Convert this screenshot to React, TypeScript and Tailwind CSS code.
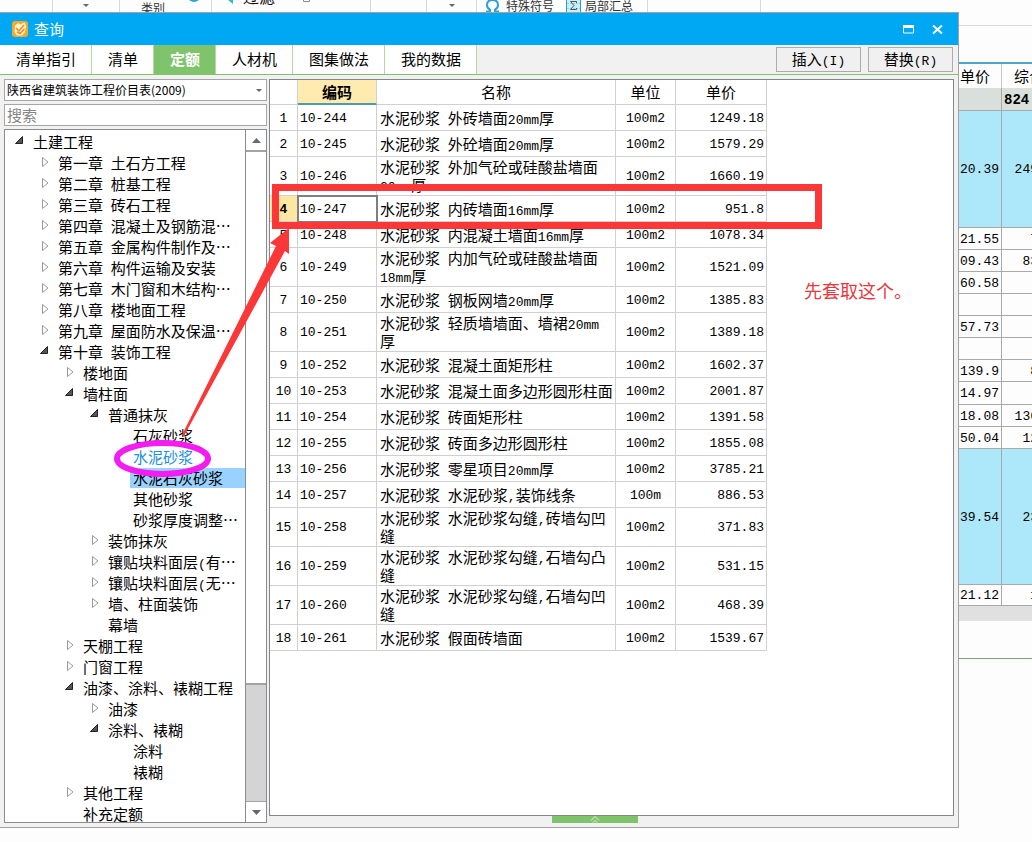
import { useState } from "react"
import clsx from "clsx"

type TreeItem = {
    level: number
    label: string
    state?: "open" | "closed"
}

const tabs = ["清单指引", "清单", "定额", "人材机", "图集做法", "我的数据"]

const tree: TreeItem[] = [
    { level: 0, label: "土建工程", state: "open" },
    { level: 1, label: "第一章 土石方工程", state: "closed" },
    { level: 1, label: "第二章 桩基工程", state: "closed" },
    { level: 1, label: "第三章 砖石工程", state: "closed" },
    { level: 1, label: "第四章 混凝土及钢筋混…", state: "closed" },
    { level: 1, label: "第五章 金属构件制作及…", state: "closed" },
    { level: 1, label: "第六章 构件运输及安装", state: "closed" },
    { level: 1, label: "第七章 木门窗和木结构…", state: "closed" },
    { level: 1, label: "第八章 楼地面工程", state: "closed" },
    { level: 1, label: "第九章 屋面防水及保温…", state: "closed" },
    { level: 1, label: "第十章 装饰工程", state: "open" },
    { level: 2, label: "楼地面", state: "closed" },
    { level: 2, label: "墙柱面", state: "open" },
    { level: 3, label: "普通抹灰", state: "open" },
    { level: 4, label: "石灰砂浆" },
    { level: 4, label: "水泥砂浆" },
    { level: 4, label: "水泥石灰砂浆" },
    { level: 4, label: "其他砂浆" },
    { level: 4, label: "砂浆厚度调整…" },
    { level: 3, label: "装饰抹灰", state: "closed" },
    { level: 3, label: "镶贴块料面层(有…", state: "closed" },
    { level: 3, label: "镶贴块料面层(无…", state: "closed" },
    { level: 3, label: "墙、柱面装饰", state: "closed" },
    { level: 3, label: "幕墙" },
    { level: 2, label: "天棚工程", state: "closed" },
    { level: 2, label: "门窗工程", state: "closed" },
    { level: 2, label: "油漆、涂料、裱糊工程", state: "open" },
    { level: 3, label: "油漆", state: "closed" },
    { level: 3, label: "涂料、裱糊", state: "open" },
    { level: 4, label: "涂料" },
    { level: 4, label: "裱糊" },
    { level: 2, label: "其他工程", state: "closed" },
    { level: 2, label: "补充定额" },
]

const indent = ["pl-[10px]", "pl-[35px]", "pl-[60px]", "pl-[85px]", "pl-[110px]"]

const rows = [
    ["10-244", "水泥砂浆 外砖墙面20mm厚", "100m2", "1249.18"],
    ["10-245", "水泥砂浆 外砼墙面20mm厚", "100m2", "1579.29"],
    ["10-246", "水泥砂浆 外加气砼或硅酸盐墙面20mm厚", "100m2", "1660.19"],
    ["10-247", "水泥砂浆 内砖墙面16mm厚", "100m2", "951.8"],
    ["10-248", "水泥砂浆 内混凝土墙面16mm厚", "100m2", "1078.34"],
    ["10-249", "水泥砂浆 内加气砼或硅酸盐墙面18mm厚", "100m2", "1521.09"],
    ["10-250", "水泥砂浆 钢板网墙20mm厚", "100m2", "1385.83"],
    ["10-251", "水泥砂浆 轻质墙墙面、墙裙20mm厚", "100m2", "1389.18"],
    ["10-252", "水泥砂浆 混凝土面矩形柱", "100m2", "1602.37"],
    ["10-253", "水泥砂浆 混凝土面多边形圆形柱面", "100m2", "2001.87"],
    ["10-254", "水泥砂浆 砖面矩形柱", "100m2", "1391.58"],
    ["10-255", "水泥砂浆 砖面多边形圆形柱", "100m2", "1855.08"],
    ["10-256", "水泥砂浆 零星项目20mm厚", "100m2", "3785.21"],
    ["10-257", "水泥砂浆 水泥砂浆,装饰线条", "100m", "886.53"],
    ["10-258", "水泥砂浆 水泥砂浆勾缝,砖墙勾凹缝", "100m2", "371.83"],
    ["10-259", "水泥砂浆 水泥砂浆勾缝,石墙勾凸缝", "100m2", "531.15"],
    ["10-260", "水泥砂浆 水泥砂浆勾缝,石墙勾凹缝", "100m2", "468.39"],
    ["10-261", "水泥砂浆 假面砖墙面", "100m2", "1539.67"],
]

const sheetRows = [
    { price: "20.39", total: "249", style: "h-[117px] bg-[#ade8fa]" },
    { price: "21.55", total: "7", style: "h-[22px]" },
    { price: "09.43", total: "83", style: "h-[22px]" },
    { price: "60.58", total: "", style: "h-[22px]" },
    { price: "", total: "", style: "h-[22px]" },
    { price: "57.73", total: "", style: "h-[22px]" },
    { price: "", total: "", style: "h-[22px]" },
    { price: "139.9", total: "8", style: "h-[22px]" },
    { price: "14.97", total: "", style: "h-[23px]" },
    { price: "18.08", total: "136", style: "h-[22px]" },
    { price: "50.04", total: "12", style: "h-[22px]" },
    { price: "39.54", total: "23", style: "h-[136px] bg-[#ade8fa]" },
    { price: "21.12", total: "1", style: "h-[21px]" },
]

// Latin runs use a narrow monospace face so they take half a Chinese character
const Mixed = ({ text }: { text: string }) => (
    <>
        {text.split(/([\x20-\x7e]+)/).map((part, i) =>
            i % 2 ? (
                <span key={i} className="font-['Liberation_Mono',monospace] text-[13px] leading-none">{part}</span>
            ) : (
                part
            )
        )}
    </>
)

const Caret = ({ className }: { className?: string }) => (
    <svg width="6" height="3" viewBox="0 0 6 3" className={className}>
        <path d="M0 0h6L3 3z" fill="#666" />
    </svg>
)

const Toolbar = () => (
    <header className="flex h-[26px] overflow-hidden border-b border-[#d8d8d8] text-xs leading-3 text-[#333]">
        <div className="w-[53px] border-r border-[#d8d8d8]" />
        <div className="flex w-[67px] justify-center border-r border-[#d8d8d8] pt-1">
            <Caret />
        </div>
        <div className="relative w-[92px] border-r border-[#d8d8d8] pl-[21px] pt-0.5">
            类别
            <svg width="12" height="6" className="absolute left-[68px] top-[-4px]">
                <circle cx="6" cy="0" r="6" fill="#22a7dc" />
            </svg>
        </div>
        <div className="flex w-[159px] border-r border-[#d8d8d8] pl-4">
            <svg width="5" height="5" className="mr-2.5">
                <path d="M0 0h5v4z" fill="#35b4dd" />
            </svg>
            <span className="-mt-2.5 text-base leading-3 text-[#111]">过滤</span>
            <svg width="7" height="3" className="ml-7">
                <path d="M.5 0v1.5h6V0" fill="none" stroke="#888" />
            </svg>
        </div>
        <div className="w-[56px] border-r border-[#d8d8d8]" />
        <div className="flex w-[50px] justify-center border-r border-[#d8d8d8] pt-1">
            <Caret />
        </div>
        <div className="flex w-[171px] border-r border-[#d8d8d8] pl-2">
            <svg width="15" height="13" viewBox="0 0 15 13" className="mr-1.5">
                <path d="M1 11.5h4V9.6C3 8.6 2 7 2 5 2 2 4.200 0 7.500 0S13 2 13 5c0 2-1 3.600-3 4.600v1.900h4" fill="none" stroke="#2d9fd0" strokeWidth="2" />
            </svg>
            <span>特殊符号</span>
            <svg width="15" height="13" viewBox="0 0 15 13" className="ml-3 mr-1">
                <path d="M0 0h15v13H0z" fill="#c9eef8" />
                <path d="M.5 0v13M14.500 0v13" stroke="#2d9fd0" />
                <path d="M1 3.500h13M1 8.500h13" stroke="#8ed3ea" strokeDasharray="2 1" />
                <path d="M10.500 3V1.500h-6L8 5.500l-3.500 4h6V8" fill="none" stroke="#555" />
            </svg>
            <span>局部汇总</span>
        </div>
        <div className="w-[113px] border-r border-[#d8d8d8]" />
    </header>
)

const Sheet = () => (
    <section className="mt-9 overflow-hidden">
        <div className="ml-auto w-[74px] overflow-hidden border-b border-[#79a77a] pb-[37px]">
            <table className="w-[80px] table-fixed border-separate border-spacing-0 border-t-2 border-[#4ba7c9] text-[15px] leading-5">
                <colgroup>
                    <col className="w-[44px]" />
                    <col className="w-[36px]" />
                </colgroup>
                <thead>
                    <tr className="h-6">
                        <th className="whitespace-nowrap border-r border-[#c5c5c5] p-0 pl-0.5 text-left font-normal">单价</th>
                        <th className="overflow-hidden whitespace-nowrap p-0 pl-3 text-left font-normal">综合</th>
                    </tr>
                </thead>
                <tbody className="font-['Liberation_Mono',monospace] text-[13px] leading-[18px]">
                    <tr className="h-[23px] bg-[#d9e0db]">
                        <td className="border-b border-r border-[#a9a9a9] p-0" />
                        <td className="border-b border-[#a9a9a9] p-0 pl-0.5 pt-0.5 text-sm leading-[18px] font-bold">824</td>
                    </tr>
                    {sheetRows.map((row, i) => (
                        <tr key={i} className={row.style}>
                            <td className="border-b border-r border-[#a9a9a9] p-0 pr-0.5 pt-0.5 text-right">{row.price}</td>
                            <td className="border-b border-[#a9a9a9] p-0 pt-0.5 text-right">{row.total}</td>
                        </tr>
                    ))}
                </tbody>
            </table>
            <div className="h-[15px] bg-[#e0e0e0]" />
        </div>
    </section>
)

const TitleBar = () => (
    <div className="flex h-8 items-center bg-[#00a8f3] pl-3 pr-[15px] text-white">
        <svg width="16" height="16" viewBox="0 0 16 16">
            <rect width="16" height="16" rx="3" fill="#f7a928" />
            <path d="M3 4.500 6.500 2 8 3.500l4.500-2L14 5l-1 6-3 3.500H5L2.500 11z" fill="#fff3d2" />
            <path d="m4 7 3 3 5-6M5 11l3 1.500L12.500 8" fill="none" stroke="#f08b1c" strokeWidth="1.500" />
        </svg>
        <h1 className="ml-1.5 flex-1 text-[15px]">查询</h1>
        <button aria-label="最大化" className="mr-[18px]">
            <svg width="11" height="9" viewBox="0 0 11 9">
                <path d="M.5.5h10v7.500H.5z" fill="none" stroke="#fff" />
                <path d="M0 0h11v3H0z" fill="#fff" />
            </svg>
        </button>
        <button aria-label="关闭">
            <svg width="11" height="9" viewBox="0 0 11 9">
                <path d="m1 .5 9 8M10 .5l-9 8" stroke="#fff" strokeWidth="2" />
            </svg>
        </button>
    </div>
)

const Tree = () => {
    const [selected, setSelected] = useState("水泥石灰砂浆")

    return (
        <div className="flex min-h-0 flex-1 border border-[#8a8b90] bg-white">
            <ul className="min-w-0 flex-1 overflow-hidden pt-0.5 text-[15px] leading-[21px]">
                {tree.map((item) => (
                    <li key={item.label} className={clsx("flex h-[21px]", indent[item.level])}>
                        <span className="w-[15px] shrink-0">
                            {item.state === "open" && (
                                <svg width="8" height="8" viewBox="0 0 8 8" className="mt-1">
                                    <path d="M7.500.5v7h-7z" fill="#555" stroke="#222" />
                                </svg>
                            )}
                            {item.state === "closed" && (
                                <svg width="8" height="10" viewBox="0 0 8 10" className="ml-0.5 mt-1">
                                    <path d="M.5.5 6 5 .5 9.500z" fill="#fff" stroke="#999" />
                                </svg>
                            )}
                        </span>
                        <button
                            onClick={() => setSelected(item.label)}
                            className={clsx(
                                "h-5 flex-1 whitespace-nowrap pl-[3px] text-left leading-5",
                                selected === item.label && "bg-[#99d1ff]",
                                item.label === "水泥砂浆" && "text-[#1c8fe3]"
                            )}
                        >
                            <Mixed text={item.label} />
                        </button>
                    </li>
                ))}
            </ul>
            <div className="flex w-[21px] flex-col border-l border-[#8a8b90] bg-[#d4d4d4]">
                <button aria-label="向上" className="flex h-[22px] items-center justify-center border-b-2 border-[#a2a3a8] bg-white">
                    <svg width="9" height="5"><path d="M0 5h9L4.500 0z" fill="#666a78" /></svg>
                </button>
                <div className="h-[533px] border-b-2 border-[#a2a3a8] bg-white" />
                <button aria-label="向下" className="mt-auto flex h-[21px] items-center justify-center border-t border-[#a2a3a8] bg-white">
                    <svg width="9" height="5"><path d="M0 0h9L4.500 5z" fill="#666" /></svg>
                </button>
            </div>
        </div>
    )
}

const QuotaTable = () => (
    <table className="w-[497px] table-fixed border-separate border-spacing-0 text-[15px] leading-[18px]">
        <colgroup>
            <col className="w-[28px]" />
            <col className="w-[79px]" />
            <col className="w-[239px]" />
            <col className="w-[60px]" />
            <col className="w-[91px]" />
        </colgroup>
        <thead>
            <tr className="h-[25px]">
                <th className="border-b border-r border-[#d0d0d0] p-0" />
                <th className="border-b-2 border-r border-b-[#4c9cae] border-r-[#d0d0d0] bg-[#ffebb0] p-0 font-bold">编码</th>
                <th className="border-b border-r border-[#d0d0d0] p-0 font-normal">名称</th>
                <th className="border-b border-r border-[#d0d0d0] p-0 font-normal">单位</th>
                <th className="border-b border-r border-[#d0d0d0] p-0 font-normal">单价</th>
            </tr>
        </thead>
        <tbody>
            {rows.map(([code, name, unit, price], i) => {
                const active = code === "10-247"
                return (
                    <tr key={code} className="h-[26px] font-['Liberation_Mono',monospace] text-[13px] leading-[18px]">
                        <td className={clsx("border-b border-r border-[#d0d0d0] p-0 pt-0.5 text-center", active && "bg-[#ffe6a3] font-bold")}>
                            {i + 1}
                        </td>
                        <td className={clsx("border-b border-r border-[#d0d0d0] p-0 pl-0.5 pt-0.5", active && "outline-2 -outline-offset-1 outline-[#7d7f82]")}>
                            {code}
                        </td>
                        <td className="border-b border-r border-[#d0d0d0] py-px pl-[3px] pr-0.5 font-['Noto_Sans_CJK_SC',sans-serif] text-[15px] leading-[18px]">
                            <Mixed text={name} />
                        </td>
                        <td className="border-b border-r border-[#d0d0d0] p-0 pt-0.5 text-center">{unit}</td>
                        <td className="border-b border-r border-[#d0d0d0] p-0 pr-0.5 pt-0.5 text-right">{price}</td>
                    </tr>
                )
            })}
        </tbody>
    </table>
)

// Hand-drawn marks that sit over the dialog
const Annotations = () => (
    <div className="pointer-events-none absolute inset-0">
        <svg className="absolute left-0 top-0" width="300" height="480" viewBox="0 0 300 480">
            <ellipse cx="162.500" cy="445.500" rx="45.500" ry="15.500" fill="none" stroke="#f41cf0" strokeWidth="6" />
            <path d="M289 215 270 230l6 3L182 422l2 1L285 238l4 3z" fill="#fb3737" />
        </svg>
        <div className="absolute left-[272px] top-[171px] h-[45px] w-[550px] border-[7px] border-[#fb3737]" />
        <p className="absolute left-[804px] top-[265px] text-lg leading-6 text-[#e8383d]">先套取这个。</p>
    </div>
)

const App = () => {
    const [tab, setTab] = useState("定额")

    return (
        <div lang="zh-CN" className="relative min-h-screen overflow-hidden bg-[#fdfdfd] font-['Noto_Sans_CJK_SC',sans-serif] text-black">
            <Toolbar />
            <Sheet />

            <main className="absolute bottom-3.5 left-0 right-[73px] top-3 flex flex-col border-b border-r border-t border-[#a3a1a5] bg-[#f1f1f1]">
                <TitleBar />

                <nav className="flex h-[30px] items-center border-b border-[#84c06c] text-[15px]">
                    {tabs.map((name) => (
                        <button
                            key={name}
                            onClick={() => setTab(name)}
                            className={clsx(
                                "h-full border-r border-[#b5d9a6] pl-4 pr-[15px]",
                                name === tab ? "bg-[#7fc36b] font-bold text-white" : "bg-white"
                            )}
                        >
                            {name}
                        </button>
                    ))}
                    <button className="ml-auto mr-[7px] h-[25px] w-[85px] border border-[#acacac] bg-[#f0f0f0]">
                        <Mixed text="插入(I)" />
                    </button>
                    <button className="mr-[5px] h-[25px] w-[85px] border border-[#acacac] bg-[#f0f0f0]">
                        <Mixed text="替换(R)" />
                    </button>
                </nav>

                <div className="flex min-h-0 flex-1 gap-0.5 px-1 pb-1 pt-1">
                    <div className="flex w-[263px] shrink-0 flex-col">
                        <div className="relative mb-[3px]">
                            <select aria-label="价目表" className="block h-[22px] w-full appearance-none border border-[#a6a6a6] bg-white pl-0.5 text-xs">
                                <option>陕西省建筑装饰工程价目表(2009)</option>
                            </select>
                            <Caret className="pointer-events-none absolute right-[5px] top-2.5" />
                        </div>
                        <input
                            aria-label="搜索"
                            placeholder="搜索"
                            className="mb-[3px] block h-[22px] w-full border border-[#a6a6a6] bg-white pl-0.5 text-[15px] placeholder:text-[#858585]"
                        />
                        <Tree />
                    </div>

                    <div className="flex min-w-0 flex-1 flex-col">
                        <div className="min-h-0 flex-1 border border-[#85868a] bg-white">
                            <QuotaTable />
                        </div>
                        <div className="flex justify-center pr-[34px]">
                            <button aria-label="展开" className="flex h-[7px] w-[86px] justify-center bg-[#7fc36b]">
                                <svg width="10" height="7" viewBox="0 0 10 7">
                                    <path d="m1 4.500 4-4 4 4M3 6.500l2-2 2 2" fill="none" stroke="#e7f6df" />
                                </svg>
                            </button>
                        </div>
                    </div>
                </div>

                <Annotations />
            </main>
        </div>
    )
}

export default App
